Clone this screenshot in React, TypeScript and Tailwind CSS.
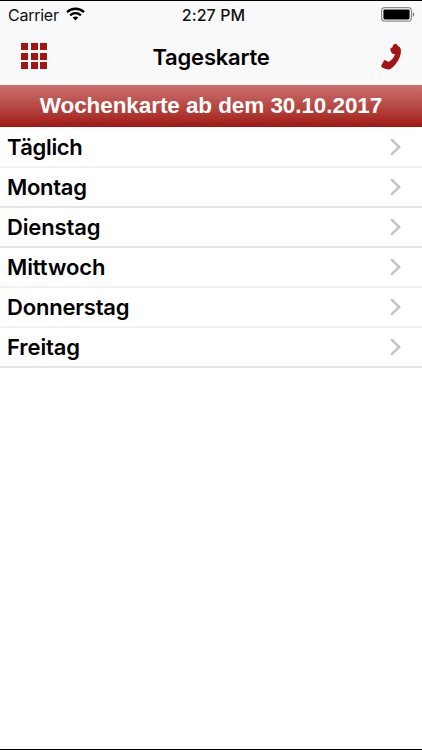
const days = [
  { label: "Täglich", tracking: "tracking-[-0.35px]", line: "border-[#f2f2f2]" },
  { label: "Montag", tracking: "tracking-[-0.3px]", line: "border-[#e6e6e7]" },
  { label: "Dienstag", tracking: "tracking-[-0.15px]", line: "border-[#e6e6e7]" },
  { label: "Mittwoch", tracking: "tracking-[-0.1px]", line: "border-[#f2f2f2]" },
  { label: "Donnerstag", tracking: "tracking-[-0.2px]", line: "border-[#f2f2f2]" },
  { label: "Freitag", tracking: "tracking-[-0.1px]", line: "border-[#e6e6e7]" },
];

function WifiIcon() {
  return (
    <svg width="19" height="14" viewBox="0 0 19 14" fill="none" stroke="#000" strokeWidth="2.3">
      <path d="M1 5.1C5.8.6 13.2.6 18 5.1" />
      <path d="M4.1 8.3c3-2.8 7.8-2.8 10.8 0" />
      <path d="M9.5 13.4 6.7 10.6c1.6-1.4 4-1.4 5.6 0Z" fill="#000" stroke="none" />
    </svg>
  );
}

function BatteryIcon() {
  return (
    <svg width="34" height="15" viewBox="0 0 34 15">
      <rect x="0.6" y="0.6" width="29.8" height="13.6" rx="3.2" fill="#fff" stroke="#8d8d8d" strokeWidth="1.2" />
      <rect x="2.4" y="2.4" width="26.2" height="10" rx="1.4" fill="#000" />
      <path d="M31.7 5v4.8c1.1-.4 1.7-1.4 1.7-2.4s-.6-2-1.7-2.4Z" fill="#8d8d8d" />
    </svg>
  );
}

function PhoneIcon() {
  return (
    <svg width="20" height="27" viewBox="0 0 20 27" fill="#a31512">
      <path d="M13.2 1.3Q14.8.4 15.8 1.4L17 3Q19.6 3.6 19.9 6.5C20.2 11 18.8 15.5 15.8 19.6 13 23.4 10.2 26.2 7.8 26.4 5.5 26.4 2.5 25.2.8 24.2Q0 23.6.4 22.6L3 17.6Q3.5 16.8 4.4 17.2L7 18.8Q8 19 9.2 18C11.8 15.8 13.6 13 14 11.200L11.6 10.800Q10.7 10.400 10.400 9.400L9.300 6.600Q9.100 5.700 9.800 5.200L11.600 3.900Q11.600 2.200 13.200 1.300Z" />
    </svg>
  );
}

function Chevron() {
  return (
    <svg width="12" height="18" viewBox="0 0 12 18" fill="none" stroke="#c4c4c9" strokeWidth="2.5">
      <path d="m1.2 1.3 8 7.7-8 7.7" />
    </svg>
  );
}

function StatusBar() {
  return (
    <div className="grid h-7 grid-cols-3 items-center text-[16px] leading-none text-[#111]">
      <div className="flex items-center gap-[7px] pl-[8px]">
        <span className="tracking-[-0.25px]">Carrier</span>
        <div className="pb-0.5">
          <WifiIcon />
        </div>
      </div>
      <span className="pl-[5px] text-center font-medium whitespace-nowrap tracking-[0.1px]">2:27 PM</span>
      <div className="flex justify-end pr-[7px] pb-0.5">
        <BatteryIcon />
      </div>
    </div>
  );
}

export default function App() {
  return (
    <div className="flex h-[750px] w-[422px] flex-col overflow-hidden border-y border-black bg-white font-['Inter','Liberation_Sans',sans-serif] text-black">
      <header className="h-[84px] shrink-0 bg-[#f9f9f9]">
        <StatusBar />
        <div className="grid h-[54px] grid-cols-[1fr_auto_1fr] items-center px-[21px]">
          <div className="grid w-fit grid-cols-3 gap-[2.5px]">
            {Array.from({ length: 9 }, (_, i) => (
              <span key={i} className="size-[7px] bg-[#a31512]" />
            ))}
          </div>
          <h1 className="pt-px text-[22px] leading-none font-semibold tracking-[-0.2px]">Tageskarte</h1>
          <div className="flex justify-end">
            <PhoneIcon />
          </div>
        </div>
      </header>

      <div className="flex h-[42px] shrink-0 items-center justify-center bg-linear-to-b from-[#cb706e] to-[#a01512] font-['Liberation_Sans',Arial,sans-serif] text-[22.5px] leading-none font-bold tracking-[-0.08px] text-white">
        Wochenkarte ab dem 30.10.2017
      </div>

      <ul className="pt-px">
        {days.map((day) => (
          <li
            key={day.label}
            className={`flex h-10 items-center justify-between border-b-2 pr-5 pl-[7px] ${day.line}`}
          >
            <span className={`text-[22px] leading-none font-semibold ${day.tracking}`}>{day.label}</span>
            <Chevron />
          </li>
        ))}
      </ul>
    </div>
  );
}
